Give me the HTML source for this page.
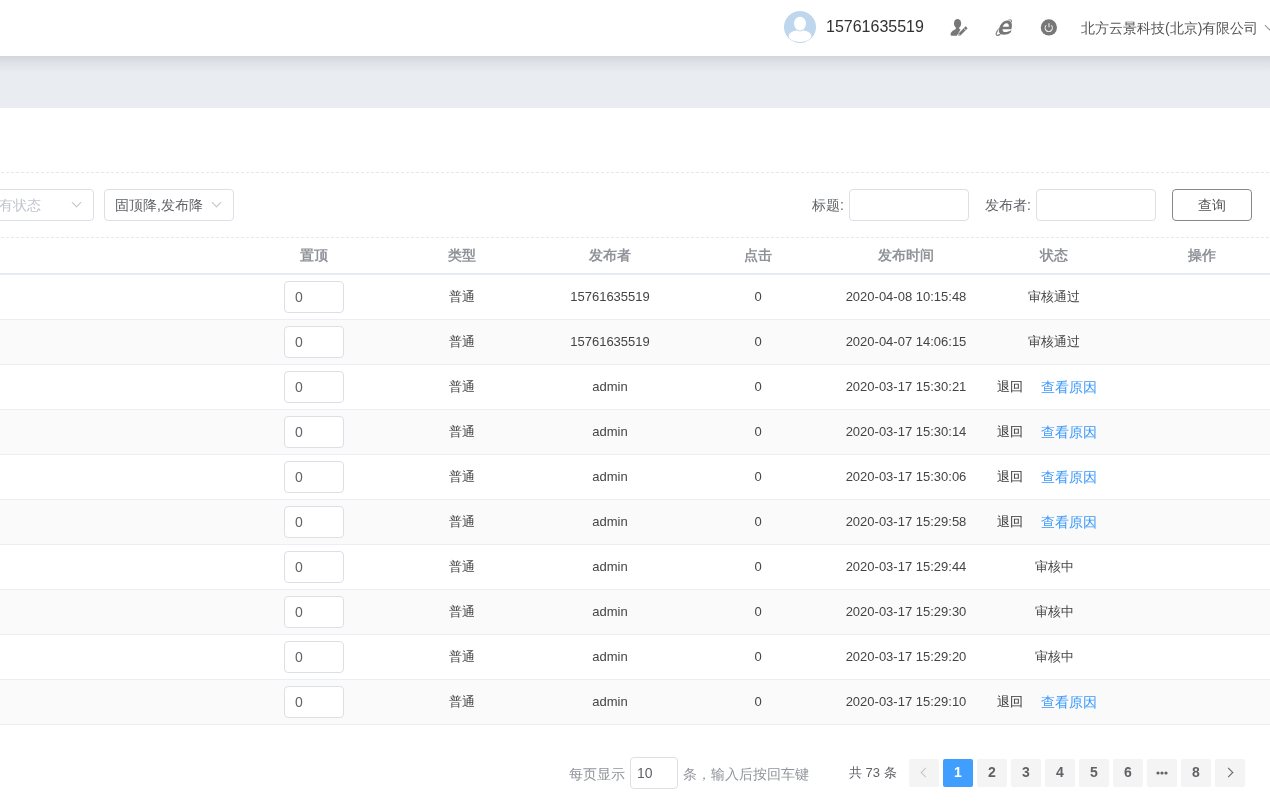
<!DOCTYPE html>
<html>
<head>
<meta charset="utf-8">
<style>
*{box-sizing:border-box;margin:0;padding:0}
html,body{width:1270px;height:802px;overflow:hidden;background:#fff}
body{font-family:"Liberation Sans",sans-serif;color:#606266;position:relative}
.abs{position:absolute}
#hdr{position:absolute;left:0;top:0;width:1270px;height:56px;background:#fff;z-index:2}
#band{position:absolute;left:0;top:56px;width:1270px;height:52px;background:linear-gradient(rgba(0,10,30,.1),rgba(0,10,30,.05) 6px,rgba(0,10,30,0) 16px),#e9edf2}
.dash{position:absolute;left:1px;width:1269px;height:1px;background:repeating-linear-gradient(90deg,#e6e8ee 0 3px,transparent 3px 5px)}
.sel{position:absolute;top:189px;height:32px;border:1px solid #dcdfe6;border-radius:4px;background:#fff;font-size:14px;line-height:30px}
.chev{position:absolute;width:7px;height:7px;border-right:1px solid #c0c4cc;border-bottom:1px solid #c0c4cc;transform:rotate(45deg)}
.inp{position:absolute;top:189px;height:32px;width:120px;border:1px solid #dcdfe6;border-radius:4px;background:#fff}
.lbl{position:absolute;top:189px;line-height:32px;font-size:14px;color:#606266}
.btn{position:absolute;left:1172px;top:189px;width:80px;height:32px;border:1px solid #888;border-radius:4px;font-size:14px;line-height:30px;text-align:center;color:#606266}
.th{position:absolute;top:237px;height:37px;line-height:37px;font-size:14px;font-weight:bold;color:#909399;text-align:center;width:148px}
.row{position:absolute;left:0;width:1270px;height:45px;border-bottom:1px solid #ebeef5}
.row.s{background:#fafafa}
.td{position:absolute;top:0;height:44px;line-height:44px;font-size:13px;color:#444;text-align:center;width:148px}
.ib{position:absolute;left:284px;top:6px;width:60px;height:32px;border:1px solid #dcdfe6;border-radius:4px;background:#fff;font-size:14px;line-height:30px;padding-left:10px;color:#606266}
.pg{position:absolute;top:759px;width:30px;height:28px;background:#f4f4f5;border-radius:2px;font-size:14px;font-weight:bold;line-height:26px;text-align:center;color:#606266}
.pg.a{background:#409eff;color:#fff}
.link{color:#3a98fb}
</style>
</head>
<body><div id="wrap" style="position:absolute;left:0;top:0;width:1270px;height:802px;will-change:transform">
<div id="hdr">
  <div class="abs" style="left:784px;top:11px;width:32px;height:32px;border-radius:50%;background:#bfd7ec;overflow:hidden">
    <svg width="32" height="32" viewBox="0 0 32 32"><ellipse cx="16" cy="25" rx="11.4" ry="6.1" fill="#fff"/><ellipse cx="16" cy="12.6" rx="6.9" ry="7.8" fill="#bfd7ec"/><ellipse cx="16" cy="12.6" rx="6" ry="6.9" fill="#fff"/></svg>
  </div>
  <div class="abs" style="left:826px;top:17px;font-size:16px;line-height:20px;color:#303133">15761635519</div>
  <svg class="abs" style="left:945px;top:15px" width="30" height="25" viewBox="0 0 30 25">
    <ellipse cx="12.55" cy="8.6" rx="3.6" ry="4.6" fill="#777"/>
    <path d="M11 12 L14 12 L14.3 13.8 Q14.8 14.3 15.6 14.5 L11.8 20.8 L6.6 20.8 Q5.4 20.7 5.5 19.3 Q5.9 16.2 10.6 14.3 Z" fill="#777"/>
    <g transform="rotate(-45 17.5 16.5)">
      <path d="M11.5 16.5 L13.6 15.1 L23.4 15.1 L23.4 17.9 L13.6 17.9 Z" fill="#777" stroke="#fff" stroke-width="0.9" paint-order="stroke"/>
      <path d="M11.5 16.5 L13.6 15.1 L13.6 17.9 Z" fill="#b5b5b5"/>
      <rect x="20.2" y="15.1" width="0.9" height="2.8" fill="#c8c8c8"/>
    </g>
  </svg>
  <svg class="abs" style="left:990px;top:15px" width="30" height="25" viewBox="0 0 30 25">
    <ellipse cx="13.8" cy="12.55" rx="10.5" ry="2.9" transform="rotate(-45.6 13.8 12.55)" fill="none" stroke="#808080" stroke-width="1"/>
    <g transform="translate(2.29 0) skewX(-10)">
    <path d="M21.9 15 L21.5 17.3 C20 19.1 17.7 19.8 14.8 19.8 C11.3 19.8 9.2 17.8 9.2 14.6 C9.2 9.6 12 5.6 15.8 5.6 C19.4 5.6 21.6 8 21.6 11.8 L21.6 14.2 Z" fill="#fff" stroke="#fff" stroke-width="0.8"/>
    <path fill-rule="evenodd" d="M21.9 15 L21.5 17.3 C20 19.1 17.7 19.8 14.8 19.8 C11.3 19.8 9.2 17.8 9.2 14.6 C9.2 9.6 12 5.6 15.8 5.6 C19.4 5.6 21.6 8 21.6 11.8 L21.6 14.2 L12.8 14.2 C13 16.1 14.3 17.1 16 17.1 C17.8 17.1 19.8 16.5 21.9 15 Z M12.6 11.8 L18.6 11.8 C18.5 9.6 17.4 8.3 15.7 8.3 C14.1 8.3 12.9 9.6 12.6 11.8 Z" fill="#777"/>
    </g>
  </svg>
  <svg class="abs" style="left:1035px;top:15px" width="30" height="25" viewBox="0 0 30 25">
    <circle cx="13.9" cy="12.4" r="8.1" fill="#777"/>
    <path d="M11.2 10.4 A3.6 3.6 0 1 0 16.3 10.4" fill="none" stroke="#eee" stroke-width="1.1"/>
    <path d="M14 8.2 L14 12.2" stroke="#e6e6e6" stroke-width="1.2"/>
  </svg>
  <div class="abs" style="left:1081px;top:18px;font-size:14px;line-height:20px;color:#555;white-space:nowrap">北方云景科技(北京)有限公司 <span style="display:inline-block;width:7px;height:7px;border-right:1px solid #909399;border-bottom:1px solid #909399;transform:rotate(45deg);position:relative;top:-4px;left:4px"></span></div>
</div>
<div id="band"></div>

<div class="dash" style="top:172px"></div>
<div class="dash" style="top:237px"></div>

<div class="sel" style="left:-36px;width:130px;color:#c0c4cc;padding-left:20px">所有状态<div class="chev" style="left:108px;top:9px"></div></div>
<div class="sel" style="left:104px;width:130px;color:#606266;padding-left:10px">固顶降,发布降<div class="chev" style="left:108px;top:9px"></div></div>

<div class="lbl" style="left:812px">标题:</div>
<div class="inp" style="left:849px"></div>
<div class="lbl" style="left:985px">发布者:</div>
<div class="inp" style="left:1036px"></div>
<div class="btn" style="color:#555">查询</div>

<div class="th" style="left:240px">置顶</div>
<div class="th" style="left:388px">类型</div>
<div class="th" style="left:536px">发布者</div>
<div class="th" style="left:684px">点击</div>
<div class="th" style="left:832px">发布时间</div>
<div class="th" style="left:980px">状态</div>
<div class="th" style="left:1128px">操作</div>
<div class="abs" style="left:0;top:273px;width:1270px;height:2px;background:#e6ebf5"></div>

<!--ROWS-->
<div class="row" style="top:275px"><div class="ib">0</div><div class="td" style="left:388px">普通</div><div class="td" style="left:536px">15761635519</div><div class="td" style="left:684px">0</div><div class="td" style="left:832px">2020-04-08 10:15:48</div><div class="td" style="left:980px">审核通过</div></div>
<div class="row s" style="top:320px"><div class="ib">0</div><div class="td" style="left:388px">普通</div><div class="td" style="left:536px">15761635519</div><div class="td" style="left:684px">0</div><div class="td" style="left:832px">2020-04-07 14:06:15</div><div class="td" style="left:980px">审核通过</div></div>
<div class="row" style="top:365px"><div class="ib">0</div><div class="td" style="left:388px">普通</div><div class="td" style="left:536px">admin</div><div class="td" style="left:684px">0</div><div class="td" style="left:832px">2020-03-17 15:30:21</div><div class="abs" style="left:997px;top:0;line-height:44px;font-size:13px;color:#333">退回</div><div class="abs link" style="left:1041px;top:0;line-height:44px;font-size:14px">查看原因</div></div>
<div class="row s" style="top:410px"><div class="ib">0</div><div class="td" style="left:388px">普通</div><div class="td" style="left:536px">admin</div><div class="td" style="left:684px">0</div><div class="td" style="left:832px">2020-03-17 15:30:14</div><div class="abs" style="left:997px;top:0;line-height:44px;font-size:13px;color:#333">退回</div><div class="abs link" style="left:1041px;top:0;line-height:44px;font-size:14px">查看原因</div></div>
<div class="row" style="top:455px"><div class="ib">0</div><div class="td" style="left:388px">普通</div><div class="td" style="left:536px">admin</div><div class="td" style="left:684px">0</div><div class="td" style="left:832px">2020-03-17 15:30:06</div><div class="abs" style="left:997px;top:0;line-height:44px;font-size:13px;color:#333">退回</div><div class="abs link" style="left:1041px;top:0;line-height:44px;font-size:14px">查看原因</div></div>
<div class="row s" style="top:500px"><div class="ib">0</div><div class="td" style="left:388px">普通</div><div class="td" style="left:536px">admin</div><div class="td" style="left:684px">0</div><div class="td" style="left:832px">2020-03-17 15:29:58</div><div class="abs" style="left:997px;top:0;line-height:44px;font-size:13px;color:#333">退回</div><div class="abs link" style="left:1041px;top:0;line-height:44px;font-size:14px">查看原因</div></div>
<div class="row" style="top:545px"><div class="ib">0</div><div class="td" style="left:388px">普通</div><div class="td" style="left:536px">admin</div><div class="td" style="left:684px">0</div><div class="td" style="left:832px">2020-03-17 15:29:44</div><div class="td" style="left:980px">审核中</div></div>
<div class="row s" style="top:590px"><div class="ib">0</div><div class="td" style="left:388px">普通</div><div class="td" style="left:536px">admin</div><div class="td" style="left:684px">0</div><div class="td" style="left:832px">2020-03-17 15:29:30</div><div class="td" style="left:980px">审核中</div></div>
<div class="row" style="top:635px"><div class="ib">0</div><div class="td" style="left:388px">普通</div><div class="td" style="left:536px">admin</div><div class="td" style="left:684px">0</div><div class="td" style="left:832px">2020-03-17 15:29:20</div><div class="td" style="left:980px">审核中</div></div>
<div class="row s" style="top:680px"><div class="ib">0</div><div class="td" style="left:388px">普通</div><div class="td" style="left:536px">admin</div><div class="td" style="left:684px">0</div><div class="td" style="left:832px">2020-03-17 15:29:10</div><div class="abs" style="left:997px;top:0;line-height:44px;font-size:13px;color:#333">退回</div><div class="abs link" style="left:1041px;top:0;line-height:44px;font-size:14px">查看原因</div></div>
<!--/ROWS-->

<div class="abs" style="left:569px;top:758px;line-height:32px;font-size:14px;color:#909399">每页显示</div>
<div class="abs" style="left:630px;top:757px;width:48px;height:32px;border:1px solid #dcdfe6;border-radius:4px;font-size:14px;line-height:31px;padding-left:6px;color:#606266">10</div>
<div class="abs" style="left:683px;top:758px;line-height:32px;font-size:14px;color:#909399">条，输入后按回车键</div>
<div class="abs" style="left:849px;top:757px;line-height:31px;font-size:13px;color:#606266">共 73 条</div>

<div class="pg" style="left:909px"><div class="abs" style="left:13px;top:10px;width:7px;height:7px;border-left:1px solid #c0c4cc;border-bottom:1px solid #c0c4cc;transform:rotate(45deg)"></div></div>
<div class="pg a" style="left:943px">1</div>
<div class="pg" style="left:977px">2</div>
<div class="pg" style="left:1011px">3</div>
<div class="pg" style="left:1045px">4</div>
<div class="pg" style="left:1079px">5</div>
<div class="pg" style="left:1113px">6</div>
<div class="pg" style="left:1147px"><svg class="abs" style="left:9px;top:12px" width="12" height="4"><circle cx="2" cy="2" r="1.6" fill="#606266"/><circle cx="6" cy="2" r="1.6" fill="#606266"/><circle cx="10" cy="2" r="1.6" fill="#606266"/></svg></div>
<div class="pg" style="left:1181px">8</div>
<div class="pg" style="left:1215px"><div class="abs" style="left:10px;top:10px;width:7px;height:7px;border-right:1px solid #606266;border-top:1px solid #606266;transform:rotate(45deg)"></div></div>
</div></body>
</html>
